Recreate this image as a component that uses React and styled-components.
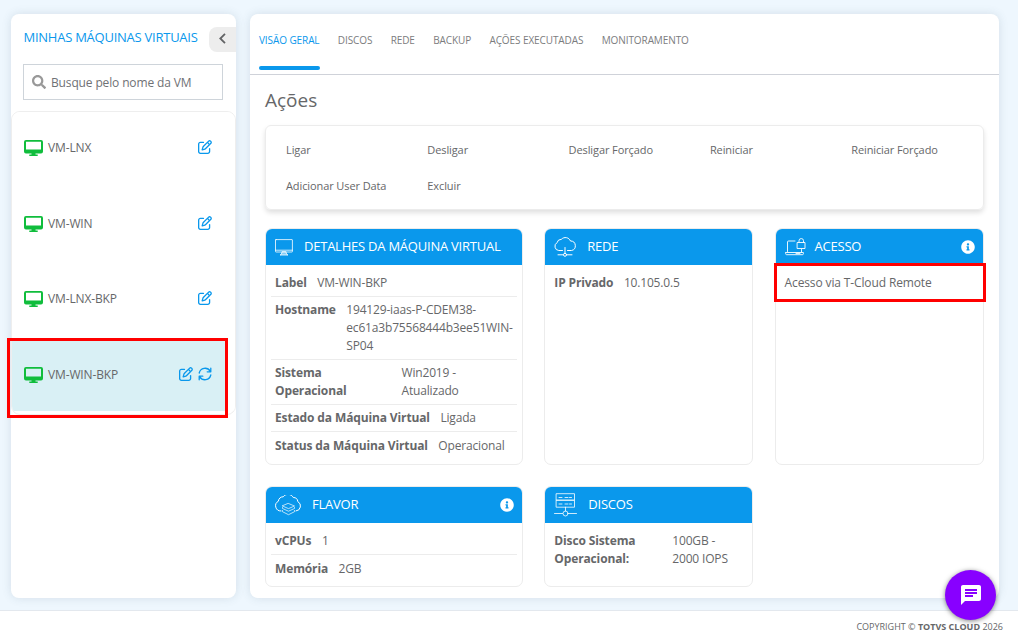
import styled, { createGlobalStyle } from "styled-components"
import { FaSearch, FaInfoCircle } from "react-icons/fa"
import { FaRegPenToSquare } from "react-icons/fa6"
import { MdChat } from "react-icons/md"

const GlobalStyle = createGlobalStyle`
    * {
        box-sizing: border-box;
    }
    body {
        margin: 0;
        background: #eef7fe;
        color: #666769;
        font-family: "Open Sans", "Noto Sans", sans-serif;
        font-size: 12px;
        letter-spacing: -0.13px;
    }
`
const Page = styled.div`
    height: 641px;
    overflow: hidden;
    display: flex;
    flex-direction: column;
`
const Content = styled.div`
    height: 610px;
    flex: none;
    display: flex;
    gap: 14px;
    padding: 14px 19px 12px 11px;
`
const Panel = styled.div`
    background: #fff;
    border-radius: 8px;
    box-shadow: 0 0 10px rgba(60, 90, 110, 0.15);
`
const Sidebar = styled(Panel)`
    width: 225px;
    flex: none;
`
const SidebarTop = styled.div`
    display: flex;
    justify-content: space-between;
    padding: 13px 0 0 12.500px;
`
const SidebarTitle = styled.h1`
    margin: -1px 0 0;
    font-size: 13px;
    font-weight: 400;
    line-height: 22px;
    letter-spacing: -0.25px;
    color: #0a98ec;
    white-space: nowrap;
`
const CollapseButton = styled.button`
    width: 27px;
    height: 25px;
    padding: 0 1px 2px 0;
    border: 0;
    border-radius: 8px 0 0 8px;
    background: #ededed;
    display: flex;
    align-items: center;
    justify-content: center;
`
const SearchBox = styled.div`
    display: flex;
    align-items: center;
    gap: 5px;
    width: 200px;
    height: 36px;
    margin: 12px 0 11px 12px;
    padding-left: 8px;
    border: 1px solid #ced4da;
    color: #6f7175;
    font-size: 12px;
    letter-spacing: -0.14px;
`
const VmList = styled.div`
    display: flex;
    flex-direction: column;
    gap: 3px;
    height: 304px;
    border: 1px solid #eeeeee;
    border-radius: 9px;
    overflow: hidden;
`
const VmRow = styled.div`
    display: flex;
    align-items: center;
    flex: none;
    height: 72.6px;
    padding: 0 23px 1.5px 12px;
    background: ${({ $selected }) => ($selected ? "linear-gradient(to right, #d9f0f5 214px, #fff 214px)" : "#fff")};
`
const VmName = styled.span`
    flex: 1;
    margin-left: 5px;
`
const VmIcons = styled.div`
    display: flex;
    gap: 5px;
    margin-top: -1px;
    color: #0a98ec;
`
const Main = styled(Panel)`
    flex: 1;
    min-width: 0;
`
const Tabs = styled.nav`
    display: flex;
    gap: 18.3px;
    height: 61px;
    padding-left: 9px;
    border-bottom: 1px solid #cfd2d9;
`
const Tab = styled.div`
    height: 56px;
    padding-top: 17px;
    line-height: 18px;
    font-size: 10px;
    letter-spacing: -0.09px;
    white-space: nowrap;
    color: ${({ $active }) => ($active ? "#0a98ec" : "#7b7c7e")};
    position: relative;
    &::after {
        content: "";
        display: ${({ $active }) => ($active ? "block" : "none")};
        position: absolute;
        left: 0;
        right: 0;
        bottom: 0;
        height: 4px;
        border-radius: 2px;
        background: #0a98ec;
    }
`
const Overview = styled.div`
    padding: 11px 15px 0;
`
const Heading = styled.h2`
    margin: 0 0 11px;
    font-size: 19px;
    line-height: 28px;
    font-weight: 400;
    letter-spacing: 0;
`
const Actions = styled.div`
    display: grid;
    grid-template-columns: repeat(4, 141.3px) 1fr;
    grid-auto-rows: 36px;
    align-items: center;
    height: 85px;
    padding: 5px 0 0 20px;
    border: 1px solid #ececec;
    border-radius: 6px;
    box-shadow: 0 3px 5px rgba(0, 0, 0, 0.12);
    font-size: 11px;
    letter-spacing: -0.1px;
`
const Cards = styled.div`
    display: grid;
    grid-template-columns: 258px 209px 209.4px;
    grid-template-rows: 237px 100.6px;
    justify-content: space-between;
    row-gap: 21px;
    margin-top: 18px;
`
const CardBox = styled.section`
    border: 1px solid #ececec;
    border-radius: 7px;
    background: #fff;
    overflow: hidden;
`
const CardHeader = styled.header`
    display: flex;
    align-items: center;
    height: 36px;
    padding: 0 8px 0 9px;
    background: #0a98ec;
    color: #fff;
`
const CardTitle = styled.h3`
    flex: 1;
    margin: 0 0 0 ${({ $offset }) => $offset}px;
    padding-bottom: 2px;
    font-size: 13px;
    font-weight: 400;
    letter-spacing: -0.23px;
    white-space: nowrap;
`
const CardBody = styled.div`
    padding: 5px 5px 0;
`
const Row = styled.div`
    display: flex;
    gap: 10.5px;
    padding: 4px;
    line-height: 18px;
    border-bottom: 1px solid #ececec;
    &:last-child {
        border-bottom: 0;
    }
    &:last-child:not(:first-child) {
        padding-top: 5px;
    }
`
const Label = styled.strong`
    flex: none;
    width: ${({ $width }) => ($width ? `${$width}px` : "auto")};
    font-weight: 700;
`
const AccessLink = styled.div`
    padding: 4px;
    line-height: 18px;
`
const Value = styled.span`
    white-space: pre-line;
    letter-spacing: -0.17px;
`
const Highlight = styled.div`
    position: absolute;
    z-index: 2;
    left: ${({ $x }) => $x}px;
    top: ${({ $y }) => $y}px;
    width: ${({ $w }) => $w}px;
    height: ${({ $h }) => $h}px;
    border: 3px solid #ff0000;
`
const Footer = styled.footer`
    flex: 1;
    border-top: 1px solid #e3e8ee;
    background: #fff;
    padding: 8px 15px 0 0;
    text-align: right;
    font-size: 9px;
    line-height: 16px;
    letter-spacing: 0;
`
const ChatButton = styled.button`
    position: absolute;
    left: 945px;
    top: 570px;
    width: 51px;
    height: 50px;
    padding: 0;
    border: 0;
    border-radius: 50%;
    background: #8800ff;
    color: #fff;
    display: flex;
    align-items: center;
    justify-content: center;
    box-shadow: 0 1px 5px rgba(0, 0, 0, 0.5);
`

const line = { fill: "none", stroke: "currentColor", strokeLinecap: "round", strokeLinejoin: "round" }

const ScreenIcon = () => (
    <svg width="19" height="17" viewBox="0 -1 19 17">
        <path d="M2 0h15a2 2 0 0 1 2 2v9.500a2 2 0 0 1-2 2h-5.500v1h2.200v1.500H5.300v-1.500h2.200v-1H2a2 2 0 0 1-2-2V2a2 2 0 0 1 2-2zM2 1.800v7.700h15V1.800z" fill="#10bd3c" fillRule="evenodd" />
    </svg>
)
const SyncIcon = () => (
    <svg width="14" height="14" viewBox="0 0 14 14" {...line} strokeWidth="1.300">
        <path d="M1.200 6A6 6 0 0 1 12.200 4.200M12.800 1.200V4.800H9.200" />
        <path d="M12.800 8A6 6 0 0 1 1.800 9.800M1.200 12.800V9.200H4.800" />
    </svg>
)
const MonitorIcon = () => (
    <svg width="18" height="17" viewBox="0 0 18 17" {...line} strokeWidth="0.800">
        <path d="M1 .6h16q.4 0 .4.400v11.500q0 .5-.5.500H1q-.5 0-.5-.5V1q0-.4.5-.4zM.6 11.200h16.800" />
        <path d="M7 13l-.6 2.200-1.400.8h8l-1.400-.8L11 13z" fill="currentColor" fillOpacity=".5" />
    </svg>
)
const CloudNetIcon = () => (
    <svg width="22" height="20" viewBox="0 0 22 20" {...line} strokeWidth="1">
        <path d="M8.500 13.500H4.800A4.200 4.200 0 0 1 3 5.700 4.500 4.500 0 0 1 7.400 2.300 5.500 5.500 0 0 1 16.500 4 4.800 4.800 0 0 1 17.500 13.500H13.500" />
        <path d="M11 10.500v5.800M4 17.800h5.200M12.800 17.800H18" />
        <circle cx="11" cy="17.800" r="1.500" />
    </svg>
)
const LaptopLockIcon = () => (
    <svg width="21" height="18" viewBox="0 0 21 18" {...line} strokeWidth="0.900">
        <path d="M10 3H3.500Q2.500 3 2.500 4v9.500M.6 14.500h17.800v1.200q0 1-1 1H1.600q-1 0-1-1zM16.500 11.500v2.500M11 15.600h4" />
        <rect x="12.500" y="4.500" width="7.500" height="6" />
        <path d="M14 4.500V2.800a2.200 2.200 0 0 1 4.500 0v1.700" />
    </svg>
)
const CloudStackIcon = () => (
    <svg width="27" height="21" viewBox="0 0 27 21" {...line} strokeWidth="1">
        <path d="M6 16A5.200 5.200 0 0 1 3.400 6.200 4.600 4.600 0 0 1 8.200 1.800 6 6 0 0 1 18.300 2.500 4.500 4.500 0 0 1 22.800 6.600 5 5 0 0 1 21 16" />
        <path d="M13.500 8.500l6 2.500-6 2.600-6-2.600zM7.500 12.500v1l6 2.700 6-2.700v-1M7.500 15.500v1.200l6 3 6-3v-1.200" strokeWidth=".7" />
    </svg>
)
const ServerIcon = () => (
    <svg width="23" height="24" viewBox="0 0 23 24" {...line} strokeWidth="0.800">
        <rect x="2.500" y=".7" width="18" height="6.500" />
        <rect x="2.500" y="7.200" width="18" height="7" />
        <path d="M5 4.500h3M11 4.500h3M15.500 4.500h2M5 11h3M11 11h3M15.500 11h2M11.500 14.200v3.800M.5 20.500h8M14.500 20.500h8" />
        <circle cx="11.500" cy="20.500" r="2.500" />
    </svg>
)

const vms = [
    { name: "VM-LNX" },
    { name: "VM-WIN" },
    { name: "VM-LNX-BKP" },
    { name: "VM-WIN-BKP", selected: true },
]
const tabs = ["VISÃO GERAL", "DISCOS", "REDE", "BACKUP", "AÇÕES EXECUTADAS", "MONITORAMENTO"]
const actions = ["Ligar", "Desligar", "Desligar Forçado", "Reiniciar", "Reiniciar Forçado", "Adicionar User Data", "Excluir"]
const details = [
    { label: "Label", value: "VM-WIN-BKP" },
    { label: "Hostname", value: "194129-iaas-P-CDEM38-\nec61a3b75568444b3ee51WIN-\nSP04" },
    { label: "Sistema Operacional", value: "Win2019 -\nAtualizado", width: 116 },
    { label: "Estado da Máquina Virtual", value: "Ligada" },
    { label: "Status da Máquina Virtual", value: "Operacional" },
]
const flavor = [
    { label: "vCPUs", value: "1" },
    { label: "Memória", value: "2GB" },
]

function Card({ icon, title, offset, info, rows = [], children }) {
    return (
        <CardBox>
            <CardHeader>
                {icon}
                <CardTitle $offset={offset}>{title}</CardTitle>
                {info && <FaInfoCircle size={14} />}
            </CardHeader>
            <CardBody>
                {rows.map((row) => (
                    <Row key={row.label}>
                        <Label $width={row.width}>{row.label}</Label>
                        <Value>{row.value}</Value>
                    </Row>
                ))}
                {children}
            </CardBody>
        </CardBox>
    )
}

export default function App() {
    return (
        <>
            <GlobalStyle />
            <Page>
                <Content>
                    <Sidebar>
                        <SidebarTop>
                            <SidebarTitle>MINHAS MÁQUINAS VIRTUAIS</SidebarTitle>
                            <CollapseButton>
                                <svg width="7" height="11" viewBox="0 0 7 11" fill="none" stroke="#636466" strokeWidth="1.800">
                                    <path d="M6 .8L1.300 5.500 6 10.200" />
                                </svg>
                            </CollapseButton>
                        </SidebarTop>
                        <SearchBox>
                            <FaSearch size={14} color="#999" />
                            <span>Busque pelo nome da VM</span>
                        </SearchBox>
                        <VmList>
                            {vms.map((vm) => (
                                <VmRow key={vm.name} $selected={vm.selected}>
                                    <ScreenIcon />
                                    <VmName>{vm.name}</VmName>
                                    <VmIcons>
                                        <FaRegPenToSquare size={14} />
                                        {vm.selected && <SyncIcon />}
                                    </VmIcons>
                                </VmRow>
                            ))}
                        </VmList>
                    </Sidebar>
                    <Main>
                        <Tabs>
                            {tabs.map((tab, i) => (
                                <Tab key={tab} $active={i === 0}>{tab}</Tab>
                            ))}
                        </Tabs>
                        <Overview>
                            <Heading>Ações</Heading>
                            <Actions>
                                {actions.map((action) => (
                                    <span key={action}>{action}</span>
                                ))}
                            </Actions>
                            <Cards>
                                <Card icon={<MonitorIcon />} title="DETALHES DA MÁQUINA VIRTUAL" offset={11} rows={details} />
                                <Card icon={<CloudNetIcon />} title="REDE" offset={11} rows={[{ label: "IP Privado", value: "10.105.0.5" }]} />
                                <Card icon={<LaptopLockIcon />} title="ACESSO" offset={9} info>
                                    <AccessLink>Acesso via T-Cloud Remote</AccessLink>
                                </Card>
                                <Card icon={<CloudStackIcon />} title="FLAVOR" offset={10} info rows={flavor} />
                                <Card
                                    icon={<ServerIcon />}
                                    title="DISCOS"
                                    offset={11}
                                    rows={[{ label: "Disco Sistema Operacional:", value: "100GB -\n2000 IOPS", width: 107.5 }]}
                                />
                            </Cards>
                        </Overview>
                    </Main>
                </Content>
                <Footer>
                    COPYRIGHT © <b>TOTVS CLOUD</b> 2026
                </Footer>
            </Page>
            <Highlight $x={7} $y={338} $w={221} $h={80} />
            <Highlight $x={774} $y={263} $w={212} $h={39} />
            <ChatButton>
                <MdChat size={24} />
            </ChatButton>
        </>
    )
}
